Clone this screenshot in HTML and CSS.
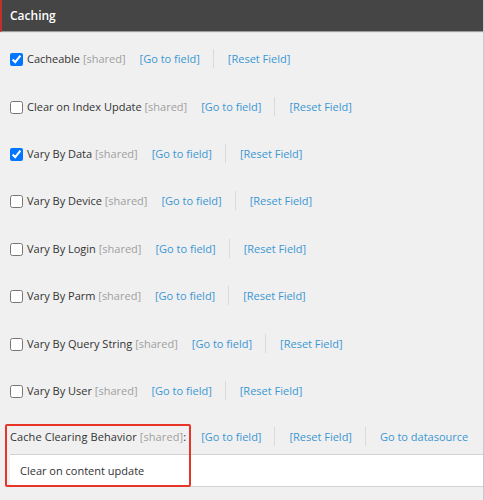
FILE: index.html
```html
<!DOCTYPE html>
<html lang="en">
<head>
    <meta charset="UTF-8">
    <title>Caching</title>
    <link rel="stylesheet" href="styles.css">
</head>
<body>
    <div class="section">
        <div class="section-header">Caching</div>
        <div class="section-body">
            <div class="field-row">
                <label><input type="checkbox" checked>Cacheable <span class="shared">[shared]</span></label>
                <a href="#">[Go to field]</a><span class="sep"></span><a href="#">[Reset Field]</a>
            </div>
            <div class="field-row">
                <label><input type="checkbox">Clear on Index Update <span class="shared">[shared]</span></label>
                <a href="#">[Go to field]</a><span class="sep"></span><a href="#">[Reset Field]</a>
            </div>
            <div class="field-row">
                <label><input type="checkbox" checked>Vary By Data <span class="shared">[shared]</span></label>
                <a href="#">[Go to field]</a><span class="sep"></span><a href="#">[Reset Field]</a>
            </div>
            <div class="field-row">
                <label><input type="checkbox">Vary By Device <span class="shared">[shared]</span></label>
                <a href="#">[Go to field]</a><span class="sep"></span><a href="#">[Reset Field]</a>
            </div>
            <div class="field-row">
                <label><input type="checkbox">Vary By Login <span class="shared">[shared]</span></label>
                <a href="#">[Go to field]</a><span class="sep"></span><a href="#">[Reset Field]</a>
            </div>
            <div class="field-row">
                <label><input type="checkbox">Vary By Parm <span class="shared">[shared]</span></label>
                <a href="#">[Go to field]</a><span class="sep"></span><a href="#">[Reset Field]</a>
            </div>
            <div class="field-row">
                <label><input type="checkbox">Vary By Query String <span class="shared">[shared]</span></label>
                <a href="#">[Go to field]</a><span class="sep"></span><a href="#">[Reset Field]</a>
            </div>
            <div class="field-row">
                <label><input type="checkbox">Vary By User <span class="shared">[shared]</span></label>
                <a href="#">[Go to field]</a><span class="sep"></span><a href="#">[Reset Field]</a>
            </div>

            <div class="select-field">
                <div class="field-row plain">
                    <span class="label">Cache Clearing Behavior <span class="shared">[shared]</span>:</span>
                    <a href="#">[Go to field]</a><span class="sep"></span><a href="#">[Reset Field]</a><span class="sep"></span><a href="#">Go to datasource</a>
                </div>
                <div class="select-box">Clear on content update</div>
                <div class="highlight"></div>
            </div>
        </div>
    </div>
</body>
</html>
```

FILE: styles.css
```css
body {
    margin: 0;
    background-color: #f0f0f0;
    font-family: "Open Sans", Arial, sans-serif;
    font-size: 11px;
    color: #333;
}
.section {
    width: 483px;
    height: 500px;
    border-right: 1px solid #c8c8c8;
    overflow: hidden;
}
.section-header {
    height: 31px;
    line-height: 31px;
    background-color: #454545;
    border-left: 2px solid #c0302a;
    border-bottom: 1px solid #9a9a9a;
    box-shadow: 0 1px 0 #e4e4e4;
    color: #fff;
    font-weight: 600;
    font-size: 12px;
    padding-left: 8px;
}
.section-body {
    padding-top: 3px;
}
.field-row {
    display: flex;
    align-items: center;
    height: 47.4px;
    padding-left: 10px;
    white-space: nowrap;
}
.field-row input[type="checkbox"] {
    width: 13px;
    height: 13px;
    margin: 0 4px 0 0;
    vertical-align: -3px;
}
.shared {
    color: #a0a0a0;
}
.field-row a {
    color: #3b97d3;
    text-decoration: none;
    margin-left: 14px;
}
.sep {
    width: 1px;
    height: 19px;
    background-color: #dadada;
    margin-left: 13px;
}
.select-field {
    position: relative;
}
.field-row.plain {
    height: 40px;
    padding-top: 4px;
    box-sizing: border-box;
}
.field-row.plain .label {
    letter-spacing: 0.1px;
}
.field-row.plain a {
    margin-left: 14px;
}
.field-row.plain a:first-of-type {
    margin-left: 15px;
}
.select-box {
    margin-left: 10px;
    height: 31px;
    line-height: 31px;
    background-color: #fff;
    border-top: 1px solid #d2d2d2;
    border-bottom: 1px solid #d2d2d2;
    padding-left: 10px;
    font-size: 11px;
}
.highlight {
    position: absolute;
    left: 5px;
    top: 10px;
    width: 182px;
    height: 59px;
    border: 2px solid #e8352a;
    border-radius: 2px;
}
```
